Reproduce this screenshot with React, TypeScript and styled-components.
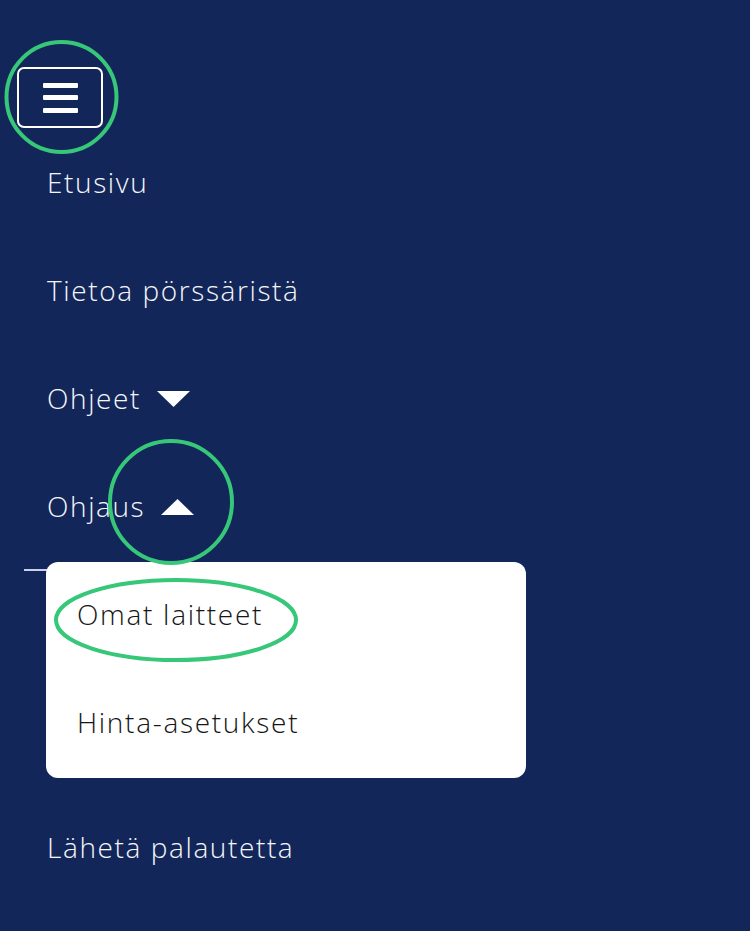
import React from "react";
import styled, { createGlobalStyle } from "styled-components";

const GlobalStyle = createGlobalStyle`
  html, body {
    margin: 0;
    padding: 0;
    background: #132659;
  }
  body {
    font-family: "Open Sans", "Noto Sans", sans-serif;
    min-height: 931px;
  }
`;

const Page = styled.div`
  position: relative;
  width: 750px;
  min-height: 931px;
  background: #132659;
  overflow: hidden;
`;

const Header = styled.header`
  padding: 67px 0 0 17px;
`;

const MenuButton = styled.button`
  width: 86px;
  height: 61px;
  box-sizing: border-box;
  border: 2px solid #ffffff;
  border-radius: 7px;
  background: transparent;
  display: flex;
  flex-direction: column;
  align-items: center;
  justify-content: center;
  gap: 7.5px;
  padding: 0;
  cursor: pointer;
`;

const Bar = styled.span`
  display: block;
  width: 35px;
  height: 5px;
  border-radius: 1px;
  background: #ffffff;
`;

const Nav = styled.nav`
  display: flex;
  flex-direction: column;
  padding-left: 47px;
`;

const NavItem = styled.a<{ $gap?: number }>`
  height: 108px;
  display: flex;
  align-items: center;
  margin-top: ${(p) => p.$gap ?? 0}px;
  color: #f5f6fa;
  font-size: 28px;
  font-weight: 300;
  letter-spacing: 1.6px;
  text-decoration: none;
  white-space: nowrap;
`;

const Caret = styled.svg`
  width: 33px;
  height: 16px;
  margin-left: 16px;
  margin-top: 2px;
  flex: none;
`;

const DropdownWrap = styled.div`
  position: relative;
  margin-left: -23px;
  padding-top: 2px;
  &::before {
    content: "";
    position: absolute;
    left: 0;
    top: 9px;
    width: 120px;
    height: 2px;
    background: #c9d1ec;
  }
`;

const Dropdown = styled.div`
  position: relative;
  margin-left: 22px;
  width: 480px;
  background: #ffffff;
  border-radius: 12px;
  display: flex;
  flex-direction: column;
`;

const DropdownItem = styled.a`
  height: 108px;
  box-sizing: border-box;
  padding: 0 0 5px 31px;
  display: flex;
  align-items: center;
  color: #161616;
  font-size: 28px;
  font-weight: 300;
  letter-spacing: 1.7px;
  text-decoration: none;
`;

const Annotations = styled.svg`
  position: absolute;
  left: 0;
  top: 0;
  width: 750px;
  height: 931px;
  pointer-events: none;
`;

const Down = () => (
  <Caret viewBox="0 0 33 16">
    <polygon points="0,0 33,0 16.5,16" fill="#ffffff" />
  </Caret>
);

const Up = () => (
  <Caret viewBox="0 0 33 16">
    <polygon points="0,16 33,16 16.5,0" fill="#ffffff" />
  </Caret>
);

export default function App() {
  return (
    <Page>
      <GlobalStyle />
      <Header>
        <MenuButton aria-label="Valikko">
          <Bar />
          <Bar />
          <Bar />
        </MenuButton>
      </Header>
      <Nav>
        <NavItem href="#">Etusivu</NavItem>
        <NavItem href="#">Tietoa pörssäristä</NavItem>
        <NavItem href="#">
          Ohjeet
          <Down />
        </NavItem>
        <NavItem href="#">
          Ohjaus
          <Up />
        </NavItem>
        <DropdownWrap>
          <Dropdown>
            <DropdownItem href="#">Omat laitteet</DropdownItem>
            <DropdownItem href="#">Hinta-asetukset</DropdownItem>
          </Dropdown>
        </DropdownWrap>
        <NavItem href="#" $gap={15}>
          Lähetä palautetta
        </NavItem>
      </Nav>
      <Annotations viewBox="0 0 750 931">
        <circle cx="61.5" cy="97" r="55" fill="none" stroke="#36c779" strokeWidth="4" />
        <circle cx="171" cy="502" r="61" fill="none" stroke="#36c779" strokeWidth="4" />
        <ellipse cx="176" cy="620" rx="120" ry="40" fill="none" stroke="#36c779" strokeWidth="4" />
      </Annotations>
    </Page>
  );
}
